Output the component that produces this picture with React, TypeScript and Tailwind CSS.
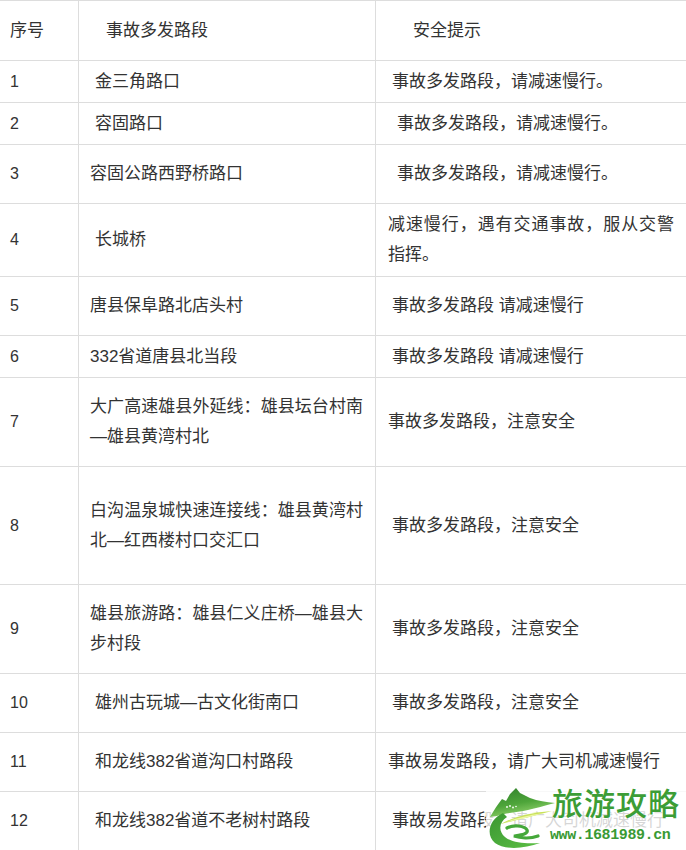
import React from "react";

type Row = {
  n: string;
  road: string;
  roadCls: string;
  tip: string;
  tipCls: string;
  h: string;
};

const rows: Row[] = [
  { n: "1", road: "金三角路口", roadCls: "pl-[16px]", tip: "事故多发路段，请减速慢行。", tipCls: "pl-[16px]", h: "h-[42px]" },
  { n: "2", road: "容固路口", roadCls: "pl-[16px]", tip: "事故多发路段，请减速慢行。", tipCls: "pl-[21px]", h: "h-[42px]" },
  { n: "3", road: "容固公路西野桥路口", roadCls: "pl-[11px]", tip: "事故多发路段，请减速慢行。", tipCls: "pl-[21px]", h: "h-[59px]" },
  { n: "4", road: "长城桥", roadCls: "pl-[16px]", tip: "减速慢行，遇有交通事故，服从交警指挥。", tipCls: "pl-[12px]", h: "h-[73px]" },
  { n: "5", road: "唐县保阜路北店头村", roadCls: "pl-[11px]", tip: "事故多发路段 请减速慢行", tipCls: "pl-[16px]", h: "h-[59px]" },
  { n: "6", road: "332省道唐县北当段", roadCls: "pl-[11px]", tip: "事故多发路段 请减速慢行", tipCls: "pl-[16px]", h: "h-[42px]" },
  { n: "7", road: "大广高速雄县外延线：雄县坛台村南—雄县黄湾村北", roadCls: "pl-[11px]", tip: "事故多发路段，注意安全", tipCls: "pl-[12px]", h: "h-[89px]" },
  { n: "8", road: "白沟温泉城快速连接线：雄县黄湾村北—红西楼村口交汇口", roadCls: "pl-[11px]", tip: "事故多发路段，注意安全", tipCls: "pl-[16px]", h: "h-[118px]" },
  { n: "9", road: "雄县旅游路：雄县仁义庄桥—雄县大步村段", roadCls: "pl-[11px]", tip: "事故多发路段，注意安全", tipCls: "pl-[16px]", h: "h-[89px]" },
  { n: "10", road: "雄州古玩城—古文化街南口", roadCls: "pl-[16px]", tip: "事故多发路段，注意安全", tipCls: "pl-[16px]", h: "h-[59px]" },
  { n: "11", road: "和龙线382省道沟口村路段", roadCls: "pl-[16px]", tip: "事故易发路段，请广大司机减速慢行", tipCls: "pl-[12px]", h: "h-[59px]" },
  { n: "12", road: "和龙线382省道不老树村路段", roadCls: "pl-[16px]", tip: "事故易发路段，请广大司机减速慢行", tipCls: "pl-[16px]", h: "h-[59px]" },
];

function Logo() {
  return (
    <svg width="70" height="65" viewBox="0 0 70 65" className="absolute left-0 top-0">
      <defs>
        <linearGradient id="mt" x1="0" y1="0" x2="0.4" y2="1">
          <stop offset="0" stopColor="#2f7f2a" />
          <stop offset="0.6" stopColor="#4ea53a" />
          <stop offset="1" stopColor="#8fd06a" />
        </linearGradient>
        <linearGradient id="sw" x1="0" y1="0" x2="1" y2="1">
          <stop offset="0" stopColor="#3a9632" />
          <stop offset="1" stopColor="#5cbf45" />
        </linearGradient>
      </defs>
      {/* mountain */}
      <path
        d="M4 31 C8 24 12 18 16 13 L20 15 L24 8 L30 2 L34 7 L38 9 L44 12 C52 15 60 16 69 17 C58 20 50 22 42 24 C32 26 20 27 11 30 Z"
        fill="url(#mt)"
      />
      <circle cx="21" cy="21" r="0.9" fill="#fff" />
      <circle cx="24" cy="20" r="0.9" fill="#fff" />
      <circle cx="27" cy="21.5" r="0.9" fill="#fff" />
      <circle cx="30" cy="20.5" r="0.8" fill="#fff" />
      {/* yellow streak */}
      <path d="M15 38 Q34 27 66 25 Q40 32 15 38 Z" fill="#c9e25a" />
      <path d="M20 36 Q36 30 58 27 Q38 33 20 36 Z" fill="#eef7a8" />
      {/* big swoosh */}
      <path
        d="M17 27 C2 34 0 50 9 57 C18 64 38 63 54 57 C40 58 26 57 19 51 C12 45 13 36 21 31 Z"
        fill="url(#sw)"
      />
      {/* inner S */}
      <path
        d="M21 42 C28 38 39 40 41 44 C43 48 34 49 28 50 C34 52 44 53 52 50"
        fill="none"
        stroke="#45a83a"
        strokeWidth="3.2"
        strokeLinecap="round"
      />
    </svg>
  );
}

export default function App() {
  return (
    <div
      lang="zh-CN"
      className="relative w-[686px] h-[850px] overflow-hidden bg-white text-[#333] text-[17px] font-['Liberation_Sans','Noto_Sans_CJK_SC',sans-serif]"
    >
      <div className="border-t border-[#dddddd]">
        {/* header */}
        <div className="grid grid-cols-[79px_297px_310px] h-[60px] border-b border-[#dddddd]">
          <div className="flex items-center pl-[10px] border-r border-[#dddddd]">序号</div>
          <div className="flex items-center pl-[27px] border-r border-[#dddddd]">事故多发路段</div>
          <div className="flex items-center pl-[37px]">安全提示</div>
        </div>
        {rows.map((r) => (
          <div key={r.n} className={`grid grid-cols-[79px_297px_310px] border-b border-[#dddddd] ${r.h}`}>
            <div className="flex items-center pl-[10px] text-[16px] border-r border-[#dddddd]">{r.n}</div>
            <div className={`flex items-center pr-[12px] border-r border-[#dddddd] ${r.roadCls}`}>
              <div className="w-full text-justify leading-[30px]">{r.road}</div>
            </div>
            <div className={`flex items-center pr-[12px] ${r.tipCls}`}>
              <div className="w-full text-justify leading-[30px]">{r.tip}</div>
            </div>
          </div>
        ))}
      </div>

      {/* watermark */}
      <div className="absolute left-[486px] top-[786px] w-[200px] h-[64px] bg-white/80">
        <Logo />
        <div className="absolute left-[66px] top-[0px] leading-none text-[31px] tracking-[1px] font-medium text-[#3c9d36] font-['Noto_Sans_CJK_SC',sans-serif] [text-shadow:0_0_2px_#fff]">
          旅游攻略
        </div>
        <div className="absolute left-[64px] top-[42px] leading-none text-[15px] font-bold tracking-[-0.4px] text-[#3a9a34] font-['Liberation_Mono',monospace]">
          www.1681989.cn
        </div>
      </div>
    </div>
  );
}
